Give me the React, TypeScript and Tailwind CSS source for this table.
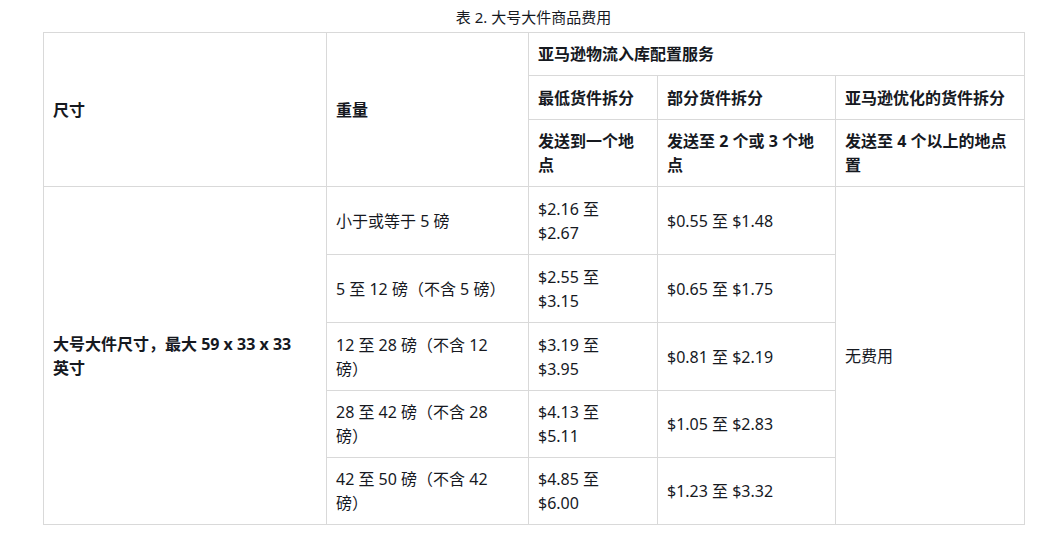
const rows = [
  { weight: '小于或等于 5 磅', low: '$2.16 至 $2.67', part: '$0.55 至 $1.48' },
  { weight: '5 至 12 磅（不含 5 磅）', low: '$2.55 至 $3.15', part: '$0.65 至 $1.75' },
  { weight: '12 至 28 磅（不含 12 磅）', low: '$3.19 至 $3.95', part: '$0.81 至 $2.19' },
  { weight: '28 至 42 磅（不含 28 磅）', low: '$4.13 至 $5.11', part: '$1.05 至 $2.83' },
  { weight: '42 至 50 磅（不含 42 磅）', low: '$4.85 至 $6.00', part: '$1.23 至 $3.32' },
];

const cell = 'border border-[#d9d9d9] pl-[9px] pr-[14px] py-[9px] align-middle text-left';

export default function App() {
  return (
    <div
      className="bg-white w-[1047px] h-[540px] pl-[43px] pt-[5px] text-[#16191f] text-[16px] leading-6"
      style={{ fontFamily: '"Noto Sans", "Noto Sans CJK SC", sans-serif' }}
    >
      <div className="w-[981px] text-center text-[15px] mb-[3px]">表 2. 大号大件商品费用</div>
      <table className="w-[981px] table-fixed border-collapse">
        <colgroup>
          <col className="w-[283px]" />
          <col className="w-[202px]" />
          <col className="w-[129px]" />
          <col className="w-[178px]" />
          <col className="w-[189px]" />
        </colgroup>
        <thead>
          <tr className="h-[43px]">
            <th rowSpan={3} className={`${cell} font-bold`}>尺寸</th>
            <th rowSpan={3} className={`${cell} font-bold`}>重量</th>
            <th colSpan={3} className={`${cell} font-bold`}>亚马逊物流入库配置服务</th>
          </tr>
          <tr className="h-[44px]">
            <th className={`${cell} font-bold`}>最低货件拆分</th>
            <th className={`${cell} font-bold`}>部分货件拆分</th>
            <th className={`${cell} font-bold`}>亚马逊优化的货件拆分</th>
          </tr>
          <tr className="h-[66px]">
            <th className={`${cell} font-bold`}>发送到一个地点</th>
            <th className={`${cell} font-bold`}>发送至 2 个或 3 个地点</th>
            <th className={`${cell} font-bold`}>发送至 4 个以上的地点置</th>
          </tr>
        </thead>
        <tbody>
          {rows.map((r, i) => (
            <tr key={i} className={i < 3 ? 'h-[68px]' : 'h-[67px]'}>
              {i === 0 && (
                <td rowSpan={5} className={`${cell} pr-[24px] font-bold`}>
                  大号大件尺寸，最大 59 x 33 x 33 英寸
                </td>
              )}
              <td className={cell}>{r.weight}</td>
              <td className={cell}>{r.low}</td>
              <td className={cell}>{r.part}</td>
              {i === 0 && (
                <td rowSpan={5} className={cell}>
                  无费用
                </td>
              )}
            </tr>
          ))}
        </tbody>
      </table>
    </div>
  );
}
